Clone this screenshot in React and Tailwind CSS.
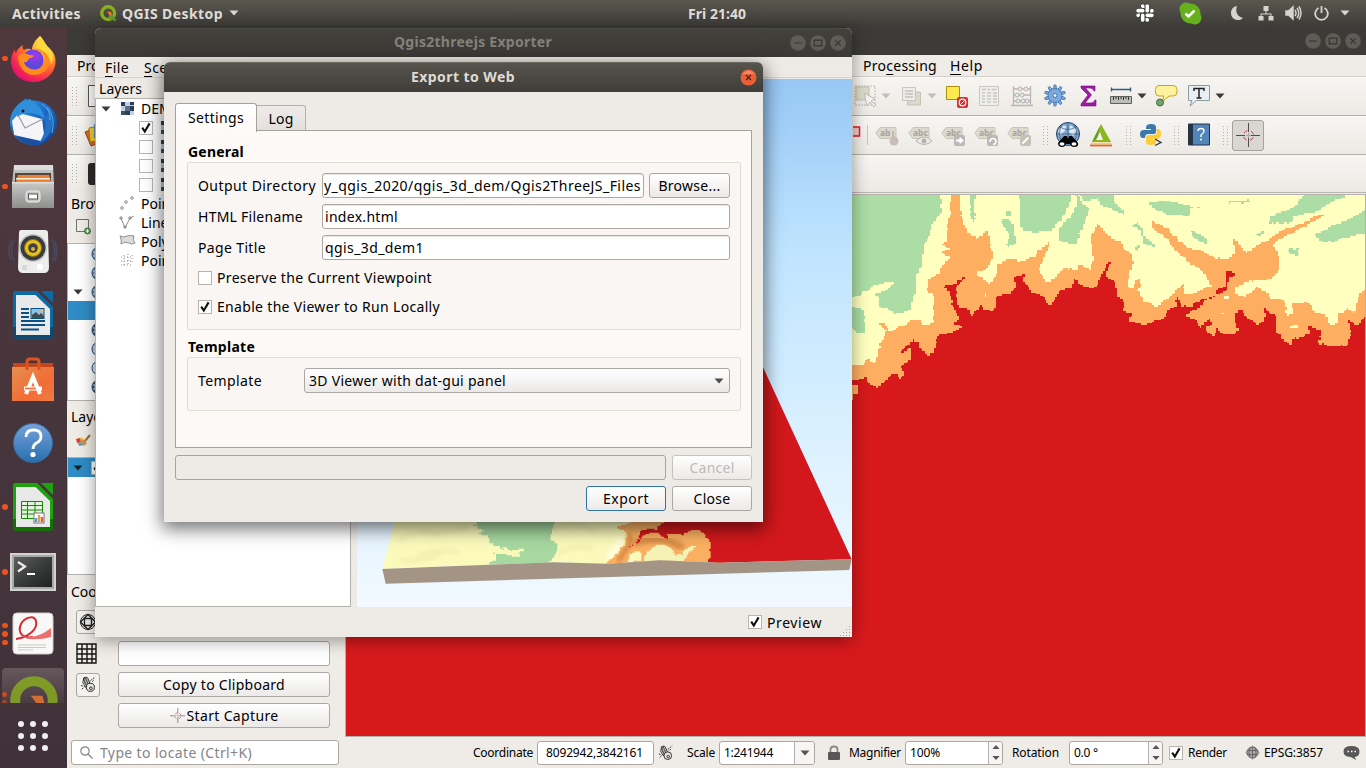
import React, { useLayoutEffect, useRef } from "react";
import { FaSlack } from "react-icons/fa";

/* Text that is tracked so that its line takes exactly w pixels. */
function T({ w, className = "", children }) {
  const ref = useRef(null);
  useLayoutEffect(() => {
    const el = ref.current;
    if (!w || !el) return;
    el.style.letterSpacing = "0px";
    const n = el.textContent.length;
    el.style.letterSpacing = (w - el.getBoundingClientRect().width) / n + "px";
  }, [w]);
  return (
    <span ref={ref} className={"inline-block shrink-0 whitespace-pre " + className}>
      {children}
    </span>
  );
}

/* ---------- raster terrain ---------- */
const CELL = 4.6;
function steps(pts, cell = CELL, noise = 1) {
  let seed = 7;
  const rnd = () => {
    seed = (seed * 16807) % 2147483647;
    return seed / 2147483647;
  };
  const snap = (v) => Math.round(v / cell) * cell;
  let d = "";
  for (let i = 0; i < pts.length; i++) {
    const [ax, ay] = pts[i];
    const [bx, by] = pts[(i + 1) % pts.length];
    const len = Math.hypot(bx - ax, by - ay);
    if (len > 450) {
      d += `${d ? "L" : "M"}${ax} ${ay}L${bx} ${by}`;
      continue;
    }
    const n = Math.max(1, Math.round(len / 7));
    for (let k = 0; k < n; k++) {
      const t = k / n;
      const e = k === 0 ? 0 : noise;
      const x = snap(ax + (bx - ax) * t + (rnd() - 0.5) * cell * 1.3 * e);
      const y = snap(ay + (by - ay) * t + (rnd() - 0.5) * cell * 1.3 * e);
      d += d ? `H${x.toFixed(1)}V${y.toFixed(1)}` : `M${x.toFixed(1)} ${y.toFixed(1)}`;
    }
  }
  return d + "Z";
}
const P = (s) => s.trim().split(/\s+/).map((p) => p.split(",").map(Number));
const E = (s) => P(s).map(([x, y]) => [x + 750, y]);

const greens = [
  P("0,0 275,0 275,15 272,75 245,110 240,140 222,165 218,215 208,240 200,260 196,305 182,360 140,372 120,358 92,350 88,322 72,312 120,292 135,275 75,285 60,300 40,305 30,318 0,325"),
  P("0,352 40,358 45,430 20,425 0,405"),
  P("358,0 380,0 380,15 372,40 374,95 362,85"),
  P("505,0 662,0 662,15 660,45 640,80 605,125 525,128 512,105 512,50"),
  P("452,92 470,88 492,110 490,130 497,160 480,172 468,160 480,138 470,115"),
  P("470,64 483,64 483,78 470,78"),
  P("680,0 690,30 700,48 718,55 700,110 690,130 680,162 640,158 625,145 625,115 655,85 680,45"),
  P("685,0 790,0 790,50 765,50 745,25 722,30 700,36"),
  E("0,0 15,15 40,36 75,72 60,68 25,50 0,45"),
  E("145,38 175,32 225,38 270,50 310,50 275,55 265,78 205,72 180,65"),
  E("385,33 452,31 452,38 385,38"),
  E("508,100 510,80 580,50 600,28 620,0 760,0 745,15 700,35 650,65 580,78 575,98"),
  E("645,135 700,105 740,88 800,60 800,132 760,138 680,158 660,150"),
  E("560,178 595,175 595,200 572,190"),
  E("95,105 110,98 130,120 130,138 165,168 130,160 122,120"),
  E("272,125 310,138 322,160 300,150 280,138"),
  E("470,135 490,120 490,132 478,138"),
  E("105,168 120,166 114,184"),
];
const orange = [
  ...P("0,525 40,525 50,508 70,522 85,480 95,450 110,420 80,398 100,398 118,425 150,410 180,392 205,390 215,405 240,400 252,390 250,310 232,300 235,265 270,250 275,225 300,200 275,185 298,175 275,160 288,150 292,100 298,80 303,15 303,0 330,0 330,15 332,80 350,130 375,145 412,125 428,200 412,235 380,250 385,262 415,280 430,275 440,245 440,220 485,207 500,215 555,200 560,180 600,155 590,190 565,240 585,278 600,275 640,235 680,240 685,225 720,242 730,200 722,155 722,135 742,103"),
  ...E("0,112 30,145 60,150 75,180 95,195 98,230 85,260 82,290 100,295 105,270 120,268 122,290 112,305 130,335 170,350 205,320 225,300 250,282 255,315 290,305 335,285 310,245 260,210 225,180 205,145 165,120 155,92 205,120 240,158 275,180 300,180 345,205 380,208 405,190 400,145 415,160 435,190 480,160 540,125 600,100 655,72 670,78 600,118 545,145 520,165 535,200 538,240 515,268 440,275 405,295 405,315 430,320 470,290 500,310 510,325 555,330 560,375 580,370 575,340 625,340 640,365 680,380 690,405 712,400 715,370 740,355 765,370 775,310 800,300 800,640"),
  [-10, 640],
];
const red = [
  ...P("-1520,1700 -1520,560 0,575 20,570 45,560 55,580 80,592 100,575 130,550 145,565 165,550 150,530 185,505 182,475 145,488 190,448 205,455 210,480 232,495 255,480 262,435 310,425 338,410 300,400 325,390 328,375 305,340 300,305 282,290 320,280 347,248 345,268 320,288 318,320 325,352 345,355 365,375 390,345 400,358 420,365 435,350 440,318 480,312 495,285 493,262 530,252 520,275 545,308 578,320 595,345 610,335 630,298 665,290 670,265 690,285 722,295 745,285"),
  ...E("0,260 25,218 32,220 20,260 45,280 50,320 75,340 68,365 98,370 85,395 130,405 190,385 200,360 228,350 228,320 245,348 275,350 285,335 340,320 355,295 375,290 378,242 410,252 385,270 380,300 345,318 310,340 285,360 258,380 285,390 300,412 320,390 335,385 335,405 315,420 335,440 350,415 360,430 395,432 420,420 405,395 405,370 428,355 430,375 470,405 500,380 492,355 505,370 528,380 530,430 570,470 575,445 605,440 630,430 625,410 640,412 665,430 655,460 700,470 740,465 755,420 745,392 770,405 800,370 800,1700"),
];
const orangeSpot = P("0,582 22,582 24,610 10,612 8,630 0,632");
const yellowSpots = [
  P("0,325 45,318 60,305 75,300 70,330 0,350"),
  P("405,308 410,308 410,320 405,320"),
  E("365,366 372,366 372,374 365,374"),
  E("568,410 595,404 595,412 568,416"),
  E("372,318 384,318 384,328 372,328"),
];

function MapCanvas() {
  return (
    <svg className="block" width="1019" height="541" viewBox="0 0 3057 1623" preserveAspectRatio="none" shapeRendering="crispEdges">
      <rect width="3057" height="1623" fill="#ffffc0" />
      <g transform="translate(1512,-15)">
        {greens.map((g, i) => (
          <path key={i} d={steps(g, CELL, 0.7)} fill="#abdda4" />
        ))}
        <path d={steps(yellowSpots[0])} fill="#ffffc0" />
        <path d={steps(orange, CELL, 0.8)} fill="#fdae61" />
        <path d={steps(red, CELL, 0.8)} fill="#d7191c" />
        <path d={steps(orangeSpot, CELL, 0)} fill="#fdae61" />
        {yellowSpots.slice(1).map((g, i) => (
          <path key={i} d={steps(g, CELL, 0)} fill="#ffffc0" />
        ))}
      </g>
    </svg>
  );
}

function Scene3D() {
  return (
    <svg className="block" width="495" height="528" viewBox="0 0 1485 1584">
      <defs>
        <linearGradient id="sky" x1="0" y1="0" x2="0" y2="1">
          <stop offset="0" stopColor="#97c7f5" />
          <stop offset="0.34" stopColor="#c1e5ff" />
          <stop offset="0.7" stopColor="#dcf1ff" />
          <stop offset="0.92" stopColor="#ebf7ff" />
          <stop offset="1" stopColor="#f2f9ff" />
        </linearGradient>
        <filter id="soft"><feGaussianBlur stdDeviation="7" /></filter>
        <clipPath id="top"><path d="M195 -80L127 177L350 168L640 157L805 161L960 151L1140 158L1535 148L1024 -960Z" /></clipPath>
      </defs>
      <rect width="1485" height="1584" fill="url(#sky)" />
      <g transform="translate(-51,1293)">
        <g clipPath="url(#top)">
          <rect x="100" y="-900" width="1100" height="1100" fill="#fbfabb" />
          <g filter="url(#soft)" stroke="#e4e1a2" strokeWidth="7" fill="none" opacity="0.7">
            <path d="M180 90q50-40 120-10M230 140q60-30 130-12M250 60q60 20 130-10M650 130q70-30 110-10M180 150q60 10 120-20" />
            <path d="M640 60q60-40 130 10" />
          </g>
          <path d="M845 85q-10 35-45 60" stroke="#fffee0" strokeWidth="20" fill="none" filter="url(#soft)" />
          <path d={steps(P("405,20 410,45 400,48 430,62 415,72 445,78 448,100 480,115 505,120 515,130 460,130 475,140 468,150 440,168 615,166 622,156 640,140 653,118 650,98 630,85 635,55 645,36 640,20"), 4)} fill="#a7d8a0" />
          <path d={steps(P("485,112 510,122 557,114 552,122 530,128 540,140 515,136 470,132 460,126 500,124"), 4, 0.6)} fill="#f8f9b9" />
          <path d={steps(P("880,20 880,36 832,54 850,64 862,80 856,100 835,130 800,162 850,175 1150,170 1150,20"), 4)} fill="#fbb061" />
          <path d="M862 75q20 10 2 35q-18 25-30 45" stroke="#cd813f" strokeWidth="12" fill="none" filter="url(#soft)" />
          <path d="M880 100q90-30 150 15" stroke="#d68b47" strokeWidth="22" fill="none" filter="url(#soft)" />
          <path d={steps(P("868,130 876,126 895,122 905,138 902,150 865,157"), 4, 0.6)} fill="#fcf9bd" />
          <path d={steps(P("918,132 935,110 970,102 990,115 1005,135 1022,134 1030,118 1050,108 1072,108 1055,125 1038,142 1030,165 905,165 912,146"), 4, 0.6)} fill="#f5f3b4" />
          <path d={steps(P("1115,180 1098,160 1110,135 1112,100 1104,82 1080,60 1050,62 1030,74 975,70 985,88 950,66 920,70 895,100 868,112 898,84 900,62 925,54 945,58 970,36 970,20 970,-900 1600,-900 1600,180"), 4, 0.8)} fill="#d2181c" />
          <path d="M1122 75v60" stroke="#ed2125" strokeWidth="16" filter="url(#soft)" />
        </g>
        <path d="M127 177L350 168L640 157L805 161L960 151L1140 158L1535 148L1528 180L137 221Z" fill="#a39486" />
      </g>
    </svg>
  );
}

/* ---------- small widgets ---------- */
function Check({ on }) {
  return (
    <span className="grid size-[14px] shrink-0 place-items-center border border-[#b9b5ae] bg-white">
      {on ? (
        <svg width="12" height="12" viewBox="0 0 12 12" className="overflow-visible">
          <path d="M2.2 5.6L4.8 9.6L9.6 1.4" fill="none" stroke="#111" strokeWidth="2.1" />
        </svg>
      ) : null}
    </span>
  );
}
const Down = ({ color = "#3a3a3a", className = "" }) => (
  <svg width="10" height="6" viewBox="0 0 10 6" className={"shrink-0 " + className}>
    <path d="M0.5 .5h9L5 5.5z" fill={color} />
  </svg>
);
const Handle = ({ className = "" }) => (
  <svg width="5" height="19" viewBox="0 0 5 19" className={"shrink-0 " + className} fill="#b5b1aa" shapeRendering="crispEdges">
    {[0, 3, 6, 9, 12, 15, 18].map((y) => (
      <g key={y}><rect x="0" y={y} width="1" height="1" /><rect x="4" y={y} width="1" height="1" /></g>
    ))}
  </svg>
);
function Btn({ className = "", children }) {
  return (
    <button className={"flex h-[25px] shrink-0 items-center justify-center rounded-[3px] border bg-linear-to-b from-white to-[#eceae8] text-black " + className}>
      {children}
    </button>
  );
}
function WinButtons({ className = "" }) {
  return (
    <div className={"flex gap-1 " + className}>
      {["M4.5 8.5h8", "M4.5 5.5h8v6h-8z", "M5.5 5.5l6 6M11.5 5.5l-6 6"].map((d) => (
        <svg key={d} width="16" height="16" viewBox="0 0 17 17">
          <circle cx="8.5" cy="8.5" r="8.3" fill="#5e5c57" />
          <path d={d} fill="none" stroke="#35342f" strokeWidth="1.2" />
        </svg>
      ))}
    </div>
  );
}
const Field = ({ className = "", children }) => (
  <div className={"flex h-[25px] items-center overflow-hidden rounded-[3px] border border-[#aba8a4] bg-white px-[2px] shadow-[inset_0_1px_0_#e8e6e4] " + className}>{children}</div>
);

/* ---------- launcher ---------- */
const Ic = ({ children, className = "" }) => (
  <svg width="48" height="48" viewBox="0 0 48 48" className={"shrink-0 overflow-visible " + className}>{children}</svg>
);
const Firefox = () => (
  <Ic>
    <defs>
      <radialGradient id="ff" cx="0.8" cy="0.1" r="1.05"><stop offset="0" stopColor="#fff44f" /><stop offset=".35" stopColor="#ffb02a" /><stop offset=".62" stopColor="#ff5a33" /><stop offset=".85" stopColor="#f0205a" /><stop offset="1" stopColor="#e00a80" /></radialGradient>
      <radialGradient id="ffp" cx=".6" cy=".3"><stop offset="0" stopColor="#a238ee" /><stop offset="1" stopColor="#5b48d8" /></radialGradient>
    </defs>
    <path d="M31 1c4 4 5 8 8 11c4 3 8 8 7.500 15C46 39 36 47 24.500 47C11 47 2 38 2 26c0-5 2-9 4-12c0 2 0 3 1 4c1-4 4-6 7-8c-1 3 0 4 1 5c3-2 6-1 8 0c0-5 3-10 8-14z" fill="url(#ff)" />
    <circle cx="24" cy="25" r="10.5" fill="url(#ffp)" />
    <path d="M9 21c4-3 8-3 11-1c2 0 4 0 5 1c-2 2-5 2-6 4c0 1-2 3-4 2c1 5 8 9 14 7c6-2 8-8 6-13c-2-5-8-7-10-7c7-1 14 4 15 11c1 8-5 15-15 15c-9 0-16-8-16-19z" fill="#ff8a20" />
    <path d="M31 1c4 4 5 8 8 11c5 5 6 12 3 18c0-8-4-12-10-15c-5-2-5-8-1-14z" fill="#ffd83d" />
  </Ic>
);
const Thunderbird = () => (
  <Ic>
    <defs><linearGradient id="tb" x1="0" y1="0" x2="1" y2="1"><stop offset="0" stopColor="#35a5e8" /><stop offset=".5" stopColor="#1b6cc6" /><stop offset="1" stopColor="#123a8c" /></linearGradient></defs>
    <path d="M1 22C3 9 12 4 18 0c-1 2-1 3 0 3c16-3 30 7 30 21c0 12-8 20-18 23C15 49 2 40 1 26z" fill="url(#tb)" />
    <path d="M10 15L33 21L35 36L32 43L5 37L3 23z" fill="#f5f5f8" />
    <path d="M9 17l7 13l18-9" fill="none" stroke="#999cab" strokeWidth="1.200" />
    <path d="M8 19C9 8 15 2 21 1c2 3 13 7 15 20c-7-6-18-9-28-2z" fill="#2f8fdd" />
    <path d="M35 19c3 5 2 17-5 26c15-6 17-26 8-35c3 5 1 8-3 9z" fill="#2370c4" />
    <path d="M38 9q9 9 5 26M33 6q9 6 8 16" stroke="#59abe9" fill="none" />
    <circle cx="14" cy="13" r="1.500" fill="#111" />
    <path d="M1 25C2 37 12 45 24 47L29 43L6 38z" fill="#1d4f9e" />
  </Ic>
);
const Files = () => (
  <Ic>
    <defs><linearGradient id="fl" x1="0" y1="0" x2="0" y2="1"><stop offset="0" stopColor="#c9c9c7" /><stop offset="1" stopColor="#8e8e8c" /></linearGradient></defs>
    <path d="M5 2h39l1 19v24H3V21z" fill="url(#fl)" />
    <path d="M5 2h39v5H5z" fill="#dedddb" />
    <path d="M6 10h36v10H6z" fill="#55453c" />
    <path d="M9 12h31l2 7H7z" fill="#ea8334" /><path d="M7 15h34v1.500H7z" fill="#fff1dd" />
    <path d="M3 19h42v26H3z" fill="url(#fl)" /><path d="M3 19h42v1.500H3z" fill="#deddda" />
    <rect x="17" y="28" width="14" height="11" rx="2.500" fill="#c8c8c6" stroke="#eee" /><rect x="19.500" y="31" width="9" height="5" fill="#fff" stroke="#555" />
  </Ic>
);
const Speaker = () => (
  <Ic>
    <path d="M5 12Q0 24 5 34M2 14Q-2 24 2 33M43 12q5 12 0 22M46 14q3 11 0 20" fill="none" stroke="#475270" strokeWidth="1.500" opacity=".7" />
    <path d="M12 3h24q3 0 3 3l1 34q0 6-5 6H14q-5 0-5-6l1-34q0-3 2-3z" fill="#ededeb" />
    <circle cx="24" cy="21" r="14" fill="#c5c6c6" /><circle cx="24" cy="21" r="12.500" fill="#3a3b3e" />
    <circle cx="24" cy="21" r="8.500" fill="#e9bf20" stroke="#8c751b" /><circle cx="24" cy="21" r="4.800" fill="#404043" /><circle cx="24" cy="22" r="2" fill="#d5b139" />
    <rect x="28" y="37" width="6" height="6" rx="2" fill="#fff" /><rect x="13" y="38" width="5" height="5" fill="#d8d8d6" />
  </Ic>
);
const Doc = ({ c, dark, children }) => (
  <Ic>
    <path d="M6 0h22l16 16v28q0 3.500-3 3.500H7q-3 0-3-3.500V3Q4 0 6 0z" fill={c} />
    <path d="M4 36v8q0 3.500 3 3.500h34q3 0 3-3.500v-8z" fill={dark} />
    <path d="M7 4h19.500L41 18v26H7z" fill="#e9e9e9" />
    <path d="M32 0h12v12z" fill={c} />
    {children}
  </Ic>
);
const Writer = () => (
  <Doc c="#0a6aa8" dark="#0c4a70">
    <path d="M12 18h8M12 22h8M12 26h8M12 30h24M12 34h24M12 38.500h18" stroke="#0a5283" strokeWidth="2" />
    <rect x="22" y="17.500" width="13" height="10" fill="#8fc3e5" stroke="#07538a" /><path d="M23 27v-3l4-3l3 3l2-2l3 3v2z" fill="#4a4a4a" /><circle cx="33" cy="20" r="1.500" fill="#f0c040" />
  </Doc>
);
const Calc = () => (
  <Doc c="#1da30b" dark="#0f7403">
    <path d="M12.500 18.500h21v17h-21zM12.500 22.500h21M12.500 27h21M12.500 31h21M18.500 18v18M26 18v18" fill="#e1f6dc" stroke="#178705" />
    <rect x="25" y="30" width="10" height="10" fill="#fff" stroke="#777" /><path d="M27 39v-4" stroke="#39a9dc" strokeWidth="2.500" /><path d="M30 39v-7" stroke="#f29a31" strokeWidth="2.500" /><path d="M33 39v-5" stroke="#dd6538" strokeWidth="2.500" />
  </Doc>
);
const Software = () => (
  <Ic>
    <defs><linearGradient id="sw" x1="0" y1="0" x2="1" y2="1"><stop offset="0" stopColor="#e59050" /><stop offset=".6" stopColor="#f16d36" /><stop offset="1" stopColor="#ee7a45" /></linearGradient></defs>
    <path d="M4 8h40v5H4z" fill="#c1471b" /><path d="M3 12h42v34H3z" fill="url(#sw)" />
    <path d="M18 15V7q0-3 3-3h6q3 0 3 3v8" fill="none" stroke="#e0531f" strokeWidth="3" />
    <path d="M17 39l7-17l7 17M15 33.500h18" fill="none" stroke="#fff" strokeWidth="4" /><path d="M16 33.500h11" stroke="#f07340" strokeWidth="1.800" />
  </Ic>
);
const Help = () => (
  <Ic>
    <defs><linearGradient id="hp" x1="0" y1="0" x2="0" y2="1"><stop offset="0" stopColor="#77a2da" /><stop offset="1" stopColor="#286fae" /></linearGradient></defs>
    <circle cx="24" cy="24" r="19.500" fill="url(#hp)" stroke="#306ca9" />
    <path d="M17 18q0-7 7.500-7q7.500 0 7.500 6.500q0 4-4.500 6.500q-3.500 2-3.500 6" fill="none" stroke="#fff" strokeWidth="2.800" /><circle cx="24" cy="35.500" r="2.600" fill="#fff" />
  </Ic>
);
const Terminal = () => (
  <Ic>
    <defs><linearGradient id="tm" x1="0" y1="0" x2="1" y2="1"><stop offset="0" stopColor="#606060" /><stop offset=".5" stopColor="#3a3b3b" /><stop offset="1" stopColor="#202121" /></linearGradient></defs>
    <rect x="1" y="5" width="46" height="38" fill="#d2d2d0" /><rect x="3" y="7" width="42" height="34" fill="#a9a9a8" /><rect x="5" y="9" width="38" height="30" fill="url(#tm)" />
    <path d="M9 14l7 4.500l-7 5" fill="none" stroke="#eee" strokeWidth="2.200" /><path d="M18 26h8" stroke="#fff" strokeWidth="2" />
  </Ic>
);
const Evince = () => (
  <Ic>
    <rect x="4" y="3" width="40" height="41" rx="4" fill="#f8f8f7" stroke="#d0cece" />
    <path d="M7 29c13-2 22-10 20-18c-2-7-12-3-15 3c-4 9 2 15 12 13" fill="none" stroke="#d92830" strokeWidth="2" />
    <path d="M22 27q10-1 20-9v9q-10 3-22 2q-6-1-8-5q4 4 10 3z" fill="#e8706d" />
    <path d="M9 35h28M9 37.500h28M9 40h15" stroke="#c9c9c9" />
  </Ic>
);
const QLogo = ({ size, o = 1 }) => (
  <svg width={size} height={size} viewBox="0 0 48 48" opacity={o} className="shrink-0">
    <circle cx="23" cy="23" r="18" fill="none" stroke="#8bb01f" strokeWidth="9.500" />
    <path d="M27 24l16 19H31L24 35z" fill="#6f9a26" /><path d="M20 19h11l4 13l-6-1z" fill="#ef7b31" /><path d="M30 29l14 15" stroke="#5c9732" strokeWidth="7" />
  </svg>
);
function Slot({ dots = 0, h = "h-16", children }) {
  return (
    <div className={"flex shrink-0 items-center " + h}>
      <div className="flex w-[9px] flex-col items-center gap-[3px] pl-px">
        {Array.from({ length: dots }, (_, i) => <i key={i} className="size-[5.500px] rounded-full bg-[#e95420]" />)}
      </div>
      {children}
    </div>
  );
}
function Launcher() {
  return (
    <nav className="flex h-[741px] w-[67px] flex-col bg-linear-to-b from-[#4e383d] to-[#40323a]">
      <Slot dots={1} h="h-[63px]"><Firefox /></Slot>
      <Slot><Thunderbird /></Slot>
      <Slot dots={1} h="h-[65px]"><Files /></Slot>
      <Slot h="h-[64px]"><Speaker /></Slot>
      <Slot><Writer /></Slot>
      <Slot><Software /></Slot>
      <Slot><Help /></Slot>
      <Slot dots={1}><Calc /></Slot>
      <Slot dots={1} h="h-[66px]"><Terminal /></Slot>
      <Slot dots={3} h="h-[58px]"><Evince /></Slot>
      <div className="ml-[2px] mt-[5px] h-[35px] w-[62px] shrink-0 overflow-hidden rounded-t-[4px] bg-linear-to-b from-[#65585b] to-[#4a3b40]">
        <div className="flex gap-[2px] pt-2">
          <div className="mt-4 flex w-[6px] flex-col gap-[3px]"><i className="size-[5px] rounded-full bg-[#c64d26]" /><i className="size-[5px] rounded-full bg-[#a3452b]" /></div>
          <QLogo size={50} o={0.8} />
        </div>
      </div>
      <div className="mt-[18px] grid grid-cols-3 gap-[6px] self-center pr-px">
        {Array.from({ length: 9 }, (_, i) => <i key={i} className="size-[6px] rounded-full bg-[#f1f0f0]" />)}
      </div>
    </nav>
  );
}

/* ---------- top bar ---------- */
function TopBar() {
  return (
    <header className="flex h-[27px] items-center bg-linear-to-b from-[#5a574f] to-[#3c3b37] pb-px text-[14px] font-bold text-[#e0ded9]">
      <T w={69} className="ml-3">Activities</T>
      <div className="ml-[19px]"><QLogo size={17} /></div>
      <T w={101} className="ml-[5px]">QGIS Desktop</T>
      <Down color="#d8d6d0" className="ml-[6px]" />
      <T w={58} className="ml-[449px]">Fri 21:40</T>
      <FaSlack size={20} className="ml-[389px] shrink-0 overflow-visible fill-white stroke-[#282725] stroke-[24px] [paint-order:stroke]" />
      <svg width="23" height="23" viewBox="0 0 23 23" className="ml-[24px]">
        <circle cx="11.500" cy="11.500" r="10" fill="#66b01d" /><circle cx="7" cy="7" r="6.500" fill="#66b01d" /><circle cx="16" cy="16" r="6.500" fill="#66b01d" />
        <path d="M6.500 11.500l3 3l6-6" fill="none" stroke="#fff" strokeWidth="2.500" />
      </svg>
      <svg width="14" height="16" viewBox="0 0 14 16" className="ml-[28px]"><path d="M7 1C5 6 7 12 13 13C9 17 1 15 1 8C1 4 4 1 7 1z" fill="#d5d3ce" /></svg>
      <svg width="16" height="16" viewBox="0 0 16 16" className="ml-[14px]" fill="#d5d3ce"><path d="M5.500 1h5v5h-5zM.500 11h5v4.500h-5zM10.500 11h5v4.500h-5zM7.500 6h1v2.500h5V11h-1V9.500h-9V11h-1V8.500h5z" /></svg>
      <svg width="17" height="16" viewBox="0 0 17 16" className="ml-[11px]" fill="none" stroke="#d5d3ce" strokeWidth="1.500"><path d="M1 6h2.500L8 2v12l-4.500-4H1z" fill="#d5d3ce" /><path d="M10 5q2 3 0 6M12 3q3.500 5 0 10M14 1.500q4 6.500 0 13" /></svg>
      <svg width="15" height="16" viewBox="0 0 15 16" className="ml-[12px]" fill="none" stroke="#d5d3ce" strokeWidth="1.800"><path d="M7.500 1v7M4.500 3a6.300 6.300 0 1 0 6 0" /></svg>
      <Down color="#d8d6d0" className="ml-[11px]" />
    </header>
  );
}

/* ---------- toolbars ---------- */
const I = ({ children, className = "", w = 22 }) => (
  <svg width={w} height="24" viewBox={`0 0 ${w} 24`} className={"shrink-0 overflow-visible " + className}>{children}</svg>
);
function ToolRowOne() {
  return (
    <div className="flex h-[38px] shrink-0 items-center border-t border-[#fbfaf8] bg-linear-to-b from-[#f7f5f2] to-[#edeae5] pb-px">
      <Handle className="ml-[5px]" />
      <svg width="18" height="22" viewBox="0 0 18 22" className="ml-[11px]"><path d="M.5.5h17v21H.5z" fill="#fff" stroke="#555" /></svg>
      <I className="ml-[748px]"><path d="M1 2h20v19H1z" fill="none" stroke="#bab8b1" strokeDasharray="2 1" /><path d="M2 3h13v13H2z" fill="#dcdac8" stroke="#c4c1ab" /><path d="M10 9l3 13l3-4l4 5l2-2l-5-4l4-2z" fill="#f4f3f0" stroke="#bbb" /></I>
      <Down color="#c2bfb9" className="ml-[5px]" />
      <I className="ml-[10px]"><path d="M6.500 8h13v13h-13z" fill="#dad8c8" stroke="#c4c2b5" /><path d="M1.500 3.500h13v13h-13z" fill="#edece8" stroke="#c8c6c0" /><path d="M4 7h8M4 10h8M4 13h8" stroke="#c4c2bc" strokeWidth="1.500" /></I>
      <Down color="#c2bfb9" className="ml-[4px]" />
      <I className="ml-[8px]"><path d="M1.500 2.500h13v13h-13z" fill="#fce94f" stroke="#a8900c" /><rect x="12" y="13" width="11" height="11" rx="2" fill="#dc2b2b" /><circle cx="17.500" cy="18.500" r="3.300" fill="none" stroke="#fff" strokeWidth="1.200" /><path d="M15.500 20.500l4-4" stroke="#fff" /></I>
      <I className="ml-[11px]"><path d="M1.500 2.500h19v19h-19z" fill="#efeeeb" stroke="#c8c7c3" /><path d="M4 5.500h4M9.500 5.500h3M14 5.500h4.500M4 9h3M9 9h4M15 9h4M4 12h3M9 12h4M15 12h4M4 15h3M9 15h4M15 15h4M4 18h3M9 18h4M15 18h4" stroke="#c8c7c3" strokeWidth="1.600" /></I>
      <I className="ml-[11px]" ><path d="M2.500 2v19M19.500 2v19M0 21.500h22M2 5h18M2 11h18M2 17h18" fill="none" stroke="#b8b6b3" strokeWidth="1.300" /><g fill="#eee9e7" stroke="#c5aead"><circle cx="9" cy="5" r="2" /><circle cx="15" cy="5" r="2" /><circle cx="6" cy="11" r="2" stroke="#abb9a8" /><circle cx="11" cy="11" r="2" stroke="#abb9a8" /><circle cx="16" cy="17" r="2" stroke="#abb0b8" /><circle cx="7" cy="17" r="2" stroke="#abb0b8" /><circle cx="12" cy="17" r="2" stroke="#abb0b8" /></g></I>
      <I className="ml-[11px]">
        {[0, 36, 72, 108, 144, 180, 216, 252, 288, 324].map((a) => (
          <path key={a} d="M9.500 5L10 1h2l.500 4z" transform={`rotate(${a} 11 11.500)`} fill="#7ea9da" stroke="#3e76b8" strokeWidth=".8" />
        ))}
        <circle cx="11" cy="11.500" r="7" fill="#7ea9da" stroke="#3e76b8" strokeWidth=".8" /><circle cx="11" cy="11.500" r="2" fill="#f3f1ee" stroke="#3e76b8" />
      </I>
      <I className="ml-[11px]"><path d="M4 2h14v5h-1q-1-3-4-3H8.500l6 7l-6.500 8h6q3 0 4-3h1v6H4v-2l7-9L4 4z" fill="#9c1ba5" stroke="#780c82" strokeWidth=".6" /></I>
      <I className="ml-[11px]"><path d="M1 5.500h20M1.500 3.500v4M20.500 3.500v4" stroke="#315c83" strokeWidth="1.400" /><path d="M.500 12.500h21v7H.500z" fill="#bcbcba" stroke="#616161" /><path d="M3.500 13v3M6 13v2M8.500 13v3M11 13v2M13.500 13v3M16 13v2M18.500 13v3" stroke="#333" /></I>
      <Down className="ml-[5px]" />
      <I className="ml-[8px]"><path d="M4 1.500h14q4 0 4 4v2.500q0 4-4 4h-4L7 18l2-6H4q-3.500 0-3.500-4V5.500q0-4 3.500-4z" fill="#fcf2a0" stroke="#c3a51d" /><circle cx="5" cy="18.500" r="3.500" fill="#6ea36c" stroke="#3b6e3b" /></I>
      <I className="ml-[11px]"><path d="M.500 1.500h21v15H8.500L2 22l2-5.500H.500z" fill="#e9f0f3" stroke="#8a9aa0" /><path d="M6 7V4.500h10V7M11 4.500V14M8.500 14h5" stroke="#222" strokeWidth="1.500" fill="none" /></I>
      <Down className="ml-[5px]" />
    </div>
  );
}
const Tag = ({ className, label = "abc", children }) => (
  <I w={24} className={className}>
    <path d="M5 4.500h16v11H5L.800 10z" fill="#dddacd" stroke="#c9c6b8" />
    <text x="5" y="13" fontSize="8.500" fontWeight="bold" fill="#a5a3a0" fontFamily="Noto Sans, sans-serif">{label}</text>
    {children}
  </I>
);
function ToolRowTwo() {
  return (
    <div className="flex h-[38px] shrink-0 items-center border-t border-[#fbfaf8] bg-linear-to-b from-[#f7f5f2] to-[#edeae5] pb-px">
      <Handle className="ml-[5px]" />
      <svg width="16" height="24" viewBox="0 0 16 24" className="ml-[7px] overflow-visible"><path d="M1 9l8-3l6 14l-8 3z" fill="#d96a2c" stroke="#9a441a" /><path d="M5 5l9-2v15l-8 1z" fill="#f4d32b" stroke="#a9850e" /><path d="M10 1l9-1v16l-9-1z" fill="#5f8fc4" /></svg>
      <svg width="8" height="12" viewBox="0 0 8 12" className="mb-[6px] ml-[753px]"><path d="M0 1h6.500v9H0" fill="#f9c6c6" stroke="#e4151b" strokeWidth="1.400" /></svg>
      <span className="ml-[6px] h-5 w-px bg-[#c8c5bf]" />
      <Tag className="ml-[7px]" label="ab"><circle cx="19" cy="18" r="4.500" fill="#c8bdbb" /><path d="M18 8v7" stroke="#bbb" strokeWidth="2" /></Tag>
      <Tag className="ml-[9px]"><path d="M8 18q8-8 16 0q-8 7-16 0z" fill="#eeedea" stroke="#b5b3ae" /><circle cx="16" cy="18" r="2.500" fill="#b5b3ae" /></Tag>
      <Tag className="ml-[9px]"><rect x="13" y="12" width="11" height="11" rx="2" fill="#bab9b8" /><path d="M15 17.500h6M18.500 15l3 2.500l-3 2.500" stroke="#fff" strokeWidth="1.800" fill="none" /></Tag>
      <Tag className="ml-[9px]"><rect x="13" y="12" width="11" height="11" rx="2" fill="#bab9b8" /><path d="M16 19a3 3 0 1 1 3 2.500" stroke="#fff" strokeWidth="1.700" fill="none" /></Tag>
      <Tag className="ml-[9px]"><rect x="13" y="12" width="11" height="11" rx="2" fill="#c4c2b5" /><path d="M15.500 20.500l6-6" stroke="#fff" strokeWidth="2" /></Tag>
      <Handle className="ml-[12px]" />
      <I w={24} className="ml-[8px]"><circle cx="12" cy="11" r="11.500" fill="#7fa7cd" stroke="#24405e" /><path d="M2 8q4-6 8-5l-1 5l-5 4zM14 2l7 5l-4 6l-4-4z" fill="#dce8f2" /><path d="M12 0v20M1 11h22M4 4q8 5 16 0M6 1q-5 10 0 18M18 1q5 10 0 18" stroke="#34597e" strokeWidth=".7" fill="none" /><path d="M8 13h3l1 3l1-3h3l6 7q1 4-4 4q-3 0-4-3h-4q-1 3-4 3q-4 0-4-4z" fill="#050505" /><ellipse cx="6" cy="21" rx="2.500" ry="1.800" fill="#fff" /><ellipse cx="18" cy="21" rx="2.500" ry="1.800" fill="#fff" /></I>
      <I w={22} className="ml-[10px]"><path d="M11 1l10 18H2z" fill="#8cb51f" /><path d="M10 9l3 8H6z" fill="#f2f0e8" /><path d="M2 19l8-16l-3 12z" fill="#5d9b2c" /><path d="M1 20.500h20" stroke="#f4d060" strokeWidth="1.800" /><path d="M0 22.500h22" stroke="#e5682b" strokeWidth="1.800" /></I>
      <Handle className="ml-[14px]" />
      <I w={22} className="ml-[9px]"><path d="M6 5q0-4 5-4q5 0 5 3v5q0 2-3 2H8q-3 0-3 4H3Q0 15 0 11q0-4 4-4h7V6H6z" fill="#3c78ab" /><path d="M16 6h2q3 0 3 5q0 4-4 5h-6v1h5v2q0 3-5 3q-5 0-5-3v-4q0-3 3-3h5q3 0 3-3z" fill="#fbcd39" /><path d="M15 16l6 3.500l-6 3" fill="none" stroke="#333" strokeWidth="1.300" /></I>
      <Handle className="ml-[12px]" />
      <I w={22} className="ml-[9px]"><path d="M.5 1h21v21H.5z" fill="#5285b8" stroke="#23303f" /><path d="M.5 1H5v21H.5z" fill="#253444" /><path d="M10 8q0-2.500 3-2.500t3 2.500q0 2-3 4v2" fill="none" stroke="#fff" strokeWidth="1.400" /><circle cx="13" cy="16.500" r="1" fill="#fff" /></I>
      <Handle className="ml-[13px]" />
      <div className="ml-[4px] grid h-[31px] w-[32px] shrink-0 place-items-center rounded-[3px] border border-[#a5a29e] bg-[#dad6d2]"><Cross size={24} /></div>
    </div>
  );
}
const Cross = ({ size }) => (
  <svg width={size} height={size} viewBox="0 0 24 24" fill="none" className="shrink-0">
    <path d="M12.500 0v9M12.500 15v9M0 12.500h9M15 12.500h9" stroke="#4d4d4d" /><circle cx="12.500" cy="12.500" r="5" stroke="#bd3f47" strokeDasharray="4 3.850" strokeDashoffset="-2" /><path d="M12.500 10v5M10 12.500h5" stroke="#aaa" />
  </svg>
);
const Mouse = ({ size = 18 }) => (
  <svg width={size} height={size} viewBox="0 0 18 18" fill="none" stroke="#222" className="shrink-0">
    <path d="M4 2q4-2 5 2l2 5l-5 3L3 7z" fill="#555" /><path d="M5 3l3 7M7 2l3 7M3 5l3 6" stroke="#eee" strokeWidth=".8" /><circle cx="11" cy="12" r="4.300" fill="#e8e6e2" /><circle cx="11.500" cy="13" r="1.400" /><path d="M2 14l3-3M1 10l3 1M11 5l5-4M13 6l2-2" strokeDasharray="2 1" />
  </svg>
);
const Globe = ({ c = "#6f9ac6" }) => (
  <svg width="16" height="16" viewBox="0 0 16 16" className="shrink-0"><circle cx="8" cy="8" r="7" fill={c} stroke="#31506f" /><path d="M2 6h12M2 10h12M5 2q-2 6 0 12" stroke="#dfe9f2" fill="none" /></svg>
);

/* ---------- left docks of the main window ---------- */
function Docks() {
  return (
    <aside className="flex w-[278px] shrink-0 flex-col text-[14px] text-black">
      <div className="h-[23px] w-[28px] overflow-hidden pl-1 pt-[2px] leading-[20px]"><T>Browser</T></div>
      <div className="h-[28px] pl-[9px] pt-[3px]">
        <svg width="16" height="17" viewBox="0 0 16 17"><path d="M.500 1.500h12v12H.500z" fill="none" stroke="#70706c" /><circle cx="11.500" cy="13" r="3" fill="#659e65" stroke="#3c743e" /><path d="M11.500 11.300v3.400M9.800 13h3.400" stroke="#fff" /></svg>
      </div>
      <div className="flex h-[158px] flex-col border border-[#b4b0aa] bg-white">
        {["#6f9ac6", "#6b8fb5", "t", "s", "#2c4a72", "#a5c1dc", "#cbdcec", "#33506c"].map((c, i) => (
          <div key={i} className={"flex h-[19px] items-center " + (c === "s" ? "bg-[#308cc6]" : "")}>
            {c === "t" ? <Down className="ml-[5px]" /> : <span className="ml-[5px] w-[10px]" />}
            {c !== "s" && <div className="ml-2"><Globe c={c === "t" ? "#6b8fb5" : c} /></div>}
          </div>
        ))}
      </div>
      <div className="h-[28px] w-[28px] overflow-hidden pl-1 pt-[6px] leading-[20px]"><T>Layers</T></div>
      <div className="h-[28px] pl-2 pt-[4px]">
        <svg width="16" height="16" viewBox="0 0 16 16"><path d="M1 6l6-2l4 7l-6 2z" fill="#e9c94c" /><path d="M1 6l4-1l1 4l-4 1z" fill="#e03c3c" /><path d="M3 10l5-1l1 3l-5 1z" fill="#5a9be0" /><path d="M8 6l4 4l-3 3l-4-4z" fill="#c6964c" /><path d="M10 8l5-6" stroke="#9c6c2f" strokeWidth="2" /></svg>
      </div>
      <div className="h-[118px] border border-[#b4b0aa] bg-white">
        <div className="flex h-[19px] items-center bg-[#308cc6]"><Down color="#17242e" className="ml-[5px]" /><span className="ml-2"><Check on /></span></div>
      </div>
      <div className="h-[32px] w-[28px] overflow-hidden pl-1 pt-[7px] leading-[20px]"><T>Coordinate Capture</T></div>
      <div className="flex h-[31px] items-center pb-px pl-[9px]">
        <div className="grid size-[24px] place-items-center rounded-[3px] border border-[#aaa7a2] bg-[#f4f2f0]"><svg width="18" height="18" viewBox="0 0 18 18" fill="none" stroke="#222"><circle cx="9" cy="9" r="7.500" /><path d="M9 1.500l7.500 7.500L9 16.500L1.500 9zM5.500 5.500h7v7h-7z" strokeWidth="1.400" /></svg></div>
      </div>
      <div className="flex h-[31px] items-center pl-[9px]">
        <svg width="21" height="21" viewBox="0 0 21 21" fill="none" stroke="#161616" strokeWidth="1.400"><path d="M1 1h19v19H1zM6 1v19M11 1v19M16 1v19M1 6h19M1 11h19M1 16h19" /></svg>
        <div className="ml-[21px] h-[25px] w-[212px] rounded-[3px] border border-[#aba8a4] bg-white" />
      </div>
      <div className="flex h-[31px] items-center pl-[9px]">
        <div className="grid size-[24px] place-items-center rounded-[3px] border border-[#aaa7a2] bg-[#f4f2f0]"><Mouse size={17} /></div>
        <Btn className="ml-[18px] w-[212px] border-[#aba8a4]"><T w={122}>Copy to Clipboard</T></Btn>
      </div>
      <div className="flex h-[31px] items-center pl-[51px]">
        <Btn className="w-[212px] border-[#aba8a4]"><Cross size={15} /><T w={92} className="ml-[2px]">Start Capture</T></Btn>
      </div>
    </aside>
  );
}

function Spin() {
  return (
    <span className="flex h-full w-[14px] flex-col items-center justify-center gap-[5px] border-l border-[#b4b1ac] bg-[#f6f5f4]">
      <Down color="#555" className="w-[8px] rotate-180" /><Down color="#555" className="w-[8px]" />
    </span>
  );
}
function StatusBar() {
  const box = "flex h-[24px] items-center justify-between overflow-hidden rounded-[3px] border border-[#aba8a4] bg-white";
  return (
    <footer className="flex h-[31px] shrink-0 items-center text-[12px] text-black">
      <div className="ml-[4px] flex h-[25px] w-[268px] items-center rounded-[3px] border border-[#aba8a4] bg-white text-[14px] text-[#858585]">
        <svg width="13" height="13" viewBox="0 0 13 13" className="ml-[8px]" fill="none" stroke="#858585" strokeWidth="1.200"><circle cx="5" cy="5" r="4.200" /><path d="M8 8l4.500 4.500" /></svg>
        <T w={152} className="ml-[7px]">Type to locate (Ctrl+K)</T>
      </div>
      <T w={60} className="ml-[134px]">Coordinate</T>
      <div className={box + " ml-[4px] w-[117px] pl-2"}><T w={97}>8092942,3842161</T></div>
      <div className="ml-[4px]"><Mouse size={16} /></div>
      <T w={28} className="ml-[13px]">Scale</T>
      <div className={box + " ml-[4px] w-[96px] pl-1"}><T w={49}>1:241944</T><span className="grid h-full w-[20px] place-items-center border-l border-[#b4b1ac] bg-[#f6f5f4]"><Down color="#555" /></span></div>
      <svg width="12" height="16" viewBox="0 0 12 16" className="ml-[13px]"><path d="M2.500 8V4.500q0-3 3.500-3t3.500 3V8" fill="none" stroke="#888" strokeWidth="1.800" /><rect y="7" width="12" height="8" rx="1" fill="#585858" /></svg>
      <T w={52} className="ml-[9px]">Magnifier</T>
      <div className={box + " ml-[4px] w-[98px] pl-1"}><T w={30}>100%</T><Spin /></div>
      <T w={47} className="ml-[9px]">Rotation</T>
      <div className={box + " ml-[10px] w-[94px] pl-1"}><T w={24}>0.0 °</T><Spin /></div>
      <div className="ml-[6px]"><Check on /></div>
      <T w={39} className="ml-[5px]">Render</T>
      <svg width="15" height="15" viewBox="0 0 15 15" className="ml-[18px]"><path d="M7.500 0L15 7.500L7.500 15L0 7.500z" fill="#bbb" /><circle cx="7.500" cy="7.500" r="5.500" fill="#aaa" stroke="#666" /><path d="M2 5.500h11M2 9.500h11M7.500 2v11M5 2.500q-2 5 0 10M10 2.500q2 5 0 10" stroke="#666" fill="none" /></svg>
      <T w={59} className="ml-[4px]">EPSG:3857</T>
      <svg width="17" height="15" viewBox="0 0 17 15" className="ml-[20px]"><path d="M8.500 1q8 0 8 5.500q0 5-5 5.500l2 3l-6-3Q.500 11.500.500 6.500Q.500 1 8.500 1z" fill="#585858" /><path d="M4.500 6.500h1.500M8 6.500h1.500M11.500 6.500H13" stroke="#fff" strokeWidth="1.700" /></svg>
    </footer>
  );
}

function MainWindow() {
  return (
    <section className="flex h-[741px] w-[1299px] flex-col overflow-hidden bg-[#efebe7]">
      <div className="flex h-[28px] shrink-0 items-center justify-end bg-[#3c3b37] pr-[5px]"><WinButtons /></div>
      <div className="flex h-[21px] shrink-0 items-center text-[14px]">
        <div className="ml-[10px] w-[18px] overflow-hidden"><T>Project</T></div>
        <T w={74} className="ml-auto mr-[13px]">Pro<span className="underline decoration-1 underline-offset-[3px]">c</span>essing</T>
        <T w={33} className="mr-[383px]"><span className="underline underline-offset-[3px]">H</span>elp</T>
      </div>
      <div className="h-px shrink-0 bg-[#d2cfca]" />
      <ToolRowOne />
      <div className="h-px shrink-0 bg-[#b4b1ac]" />
      <ToolRowTwo />
      <div className="h-px shrink-0 bg-[#b4b1ac]" />
      <div className="flex h-[37px] shrink-0 items-center bg-linear-to-b from-[#f7f5f2] to-[#edeae5]">
        <Handle className="ml-[5px]" />
        <span className="ml-[11px] grid size-[22px] place-items-center rounded-[3px] bg-[#2b2b2b] text-[15px] font-bold text-[#e6df2a]">S</span>
      </div>
      <div className="flex h-[545px] shrink-0">
        <Docks />
        <div className="flex flex-col border-t border-t-[#b9b6b2] bg-[#efebe7]">
          <div className="mt-px border border-[#b4b0ab]"><MapCanvas /></div>
        </div>
      </div>
      <StatusBar />
    </section>
  );
}

/* ---------- exporter window ---------- */
const Dem = () => (
  <svg width="13" height="13" viewBox="0 0 13 13" className="shrink-0" shapeRendering="crispEdges"><path d="M0 0h13v13H0z" fill="#bcd0e6" /><path d="M0 0h4v4H0zM9 4h4v5H9zM4 9h5v4H4zM9 0h4v3H9z" fill="#2d3d54" /><path d="M4 4h5v5H4z" fill="#5d6f87" /><path d="M0 9h4v4H0z" fill="#3e5068" /></svg>
);
const treeIcons = [
  <g key="a"><circle cx="3" cy="13" r="1.300" /><circle cx="7" cy="7" r="1.300" /><circle cx="13" cy="3" r="1.300" /></g>,
  <path key="b" d="M2 4l4 10l5-10l4-2M1 3h2v2H1zM5 12h2v2H5zM10 3h2v2h-2z" />,
  <path key="c" d="M1 3q4 2 7 0q4-1 7 0q-2 4 1 7q-4 2-6 0q-5-2-8 1q1-4-1-8z" fill="#dcdcdc" />,
  <g key="d" strokeDasharray="1 2"><path d="M2 5h12M2 9h12M2 13h10M5 3v10M9 2v12M13 3v8" /></g>,
];
function Exporter() {
  return (
    <section className="flex h-[609px] w-[757px] flex-col overflow-hidden rounded-t-[6px] bg-[#eeebe7] text-[14px] text-black">
      <div className="flex h-[29px] shrink-0 items-center border-t border-[#4a4944] bg-linear-to-b from-[#42413c] to-[#3a3935]">
        <T w={158} className="mb-[3px] ml-[299px] font-bold text-[#84817b]">Qgis2threejs Exporter</T>
        <WinButtons className="mb-px ml-auto mr-[6px]" />
      </div>
      <div className="flex h-[21px] shrink-0 items-center border-b border-[#d5d1cc]">
        <T w={24} className="ml-[10px]"><span className="underline underline-offset-[3px]">F</span>ile</T>
        <T w={41} className="ml-[15px]"><span className="underline underline-offset-[3px]">S</span>cene</T>
      </div>
      <div className="flex h-[529px] shrink-0">
        <div className="flex w-[256px] flex-col">
          <div className="h-[19px] shrink-0 pl-1 leading-[22px]"><T w={43}>Layers</T></div>
          <div className="mt-px h-[509px] border border-[#b4b0ab] bg-white">
            <div className="flex h-[19px] items-center pl-[5px]"><Down /><span className="ml-[10px]"><Dem /></span><T className="ml-[7px]">DEM</T></div>
            {[true, false, false, false].map((on, i) => (
              <div key={i} className="flex h-[19px] items-center pl-[43px]"><Check on={on} /><span className="ml-2"><Dem /></span></div>
            ))}
            {["Point", "Line", "Polygon", "Point Cloud"].map((t, i) => (
              <div key={t} className="flex h-[19px] items-center pl-[23px]">
                <svg width="17" height="17" viewBox="0 0 17 17" fill="none" stroke="#8d8d8d">{treeIcons[i]}</svg>
                <T className="ml-[5px]">{t}</T>
              </div>
            ))}
          </div>
        </div>
        <div className="ml-[6px] mt-px"><Scene3D /></div>
      </div>
      <div className="flex h-[30px] items-center">
        <div className="ml-[653px]"><Check on /></div>
        <T w={55} className="ml-[5px]">Preview</T>
        <svg width="11" height="11" viewBox="0 0 11 11" className="ml-auto mr-px self-end" fill="#aaa69f" shapeRendering="crispEdges">
          {[[9, 0], [9, 3], [6, 3], [9, 6], [6, 6], [3, 6], [9, 9], [6, 9], [3, 9], [0, 9]].map(([x, y]) => <rect key={x + "-" + y} x={x} y={y} width="1" height="1" />)}
        </svg>
      </div>
    </section>
  );
}

/* ---------- export dialog ---------- */
function Dialog() {
  const row = "flex h-[31px] items-center";
  return (
    <section className="flex h-[460px] w-[599px] flex-col overflow-hidden rounded-t-[6px] bg-[#eeebe7] text-[14px] text-black">
      <div className="flex h-[30px] shrink-0 items-center border-t border-[#6a675f] bg-linear-to-b from-[#57544c] to-[#3e3d39]">
        <T w={104} className="mb-[2px] ml-[247px] font-bold text-[#dfdbd2]">Export to Web</T>
        <svg width="17" height="17" viewBox="0 0 17 17" className="mb-px ml-auto mr-[6px]">
          <circle cx="8.500" cy="8.500" r="8" fill="#ec5f35" /><path d="M2 5q6.500-7 13 0z" fill="#f3866a" /><path d="M6 6l5 5M11 6l-5 5" stroke="#4a2015" strokeWidth="1.200" />
        </svg>
      </div>
      <div className="flex h-[39px] shrink-0 items-end pl-[11px]">
        <div className="relative z-10 -mb-px flex h-[29px] w-[82px] justify-center rounded-t-[3px] border border-b-0 border-[#a5a29e] bg-linear-to-b from-white to-[#fdf9f6] pt-[3px]"><T w={56}>Settings</T></div>
        <div className="flex h-[26px] w-[49px] justify-center rounded-tr-[3px] border border-b-0 border-l-0 border-[#b4b1ac] bg-linear-to-b from-[#eeecea] to-[#e2dfdb] pt-[2px]"><T w={25}>Log</T></div>
      </div>
      <div className="mx-[11px] mt-[-1px] flex h-[318px] shrink-0 flex-col border border-[#a5a29e] bg-[#fdf9f6] pl-[11px] pr-[10px]">
        <div className="h-[31px] pt-[11px] leading-[20px]"><T w={56} className="ml-px font-bold">General</T></div>
        <div className="h-[168px] rounded-[2px] border border-[#e0dcd8] bg-[#faf6f3] px-[10px] pt-[7px]">
          <div className={row}><T w={118}>Output Directory</T>
            <Field className="ml-[6px] w-[322px] justify-end"><T w={317}>y_qgis_2020/qgis_3d_dem/Qgis2ThreeJS_Files</T></Field>
            <Btn className="ml-[5px] w-[81px] border-[#aba8a4]"><T w={62}>Browse...</T></Btn></div>
          <div className={row}><T w={105}>HTML Filename</T><Field className="ml-[19px] w-[408px]"><T w={73}>index.html</T></Field></div>
          <div className={row}><T w={68}>Page Title</T><Field className="ml-[56px] w-[408px]"><T w={99}>qgis_3d_dem1</T></Field></div>
          <div className="flex h-[29px] items-center"><Check /><T w={215} className="ml-[5px]">Preserve the Current Viewpoint</T></div>
          <div className="flex h-[29px] items-center"><Check on /><T w={223} className="ml-[5px]">Enable the Viewer to Run Locally</T></div>
        </div>
        <div className="h-[27px] pt-[7px] leading-[20px]"><T w={67} className="ml-px font-bold">Template</T></div>
        <div className="h-[54px] rounded-[2px] border border-[#e0dcd8] bg-[#faf6f3] px-[10px] pt-[7px]">
          <div className={row}><T w={64}>Template</T>
            <div className="ml-[42px] flex h-[25px] w-[426px] items-center rounded-[3px] border border-[#aba8a4] bg-linear-to-b from-white to-[#ebe9e7] pl-1 pr-[5px]"><T w={197}>3D Viewer with dat-gui panel</T><Down color="#4d4d4d" className="ml-auto" /></div></div>
        </div>
      </div>
      <div className="ml-[11px] mt-[7px] flex gap-[6px]">
        <div className="h-[25px] w-[491px] rounded-[3px] border border-[#a7a4a0] bg-[#eeebe7]" />
        <Btn className="w-[80px] border-[#c6c3bf]"><T w={45} className="text-[#bdbab8]">Cancel</T></Btn>
      </div>
      <div className="ml-[422px] mt-[6px] flex gap-[6px]">
        <Btn className="w-[80px] border-[#2f74a3]"><T w={46}>Export</T></Btn>
        <Btn className="w-[80px] border-[#aba8a4]"><T w={37}>Close</T></Btn>
      </div>
    </section>
  );
}

export default function App() {
  return (
    <div className="relative h-[768px] w-[1366px] overflow-hidden bg-[#3c3b37] font-['Noto_Sans',sans-serif]">
      <TopBar />
      <div className="flex"><Launcher /><MainWindow /></div>
      <div className="absolute left-[95px] top-[28px] shadow-[0_3px_16px_rgba(0,0,0,0.4)]"><Exporter /></div>
      <div className="absolute left-[164px] top-[62px] rounded-t-[6px] shadow-[0_5px_18px_2px_rgba(0,0,0,0.55)]"><Dialog /></div>
    </div>
  );
}
